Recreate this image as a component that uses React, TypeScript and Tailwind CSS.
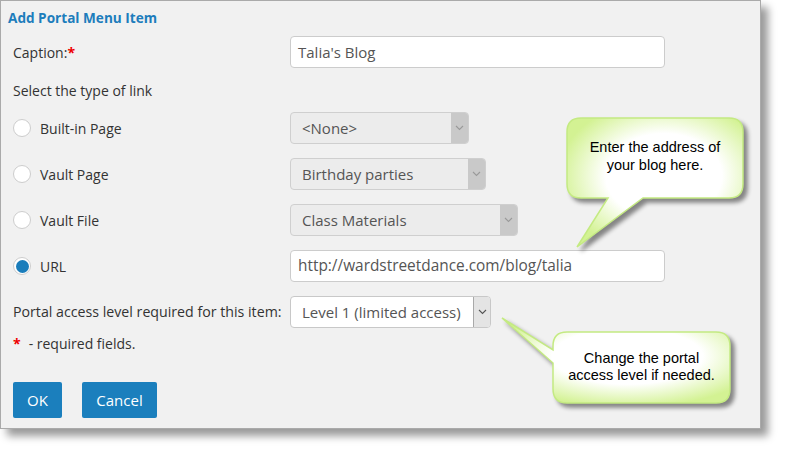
import React from 'react';

type SelectProps = {
  value: string;
  width: string;
  disabled?: boolean;
};

function Chevron({ color }: { color: string }) {
  return (
    <svg width="9" height="6" viewBox="0 0 9 6" fill="none">
      <path d="M1 1l3.5 3.5L8 1" stroke={color} strokeWidth="1.1" />
    </svg>
  );
}

function FakeSelect({ value, width, disabled }: SelectProps) {
  return (
    <div
      className={`flex h-[32px] items-stretch overflow-hidden rounded-[4px] border ${width} ${
        disabled ? 'border-[#cfcfcf] bg-[#ececec]' : 'border-[#c8c8c8] bg-white'
      }`}
    >
      <div className="flex flex-1 items-center whitespace-nowrap pl-[11px] text-[15px] text-[#555]">{value}</div>
      <div
        className={`flex w-[17px] shrink-0 items-center justify-center ${
          disabled ? 'bg-[#c9c9c9]' : 'border-l border-[#a9a9a9] bg-[#e4e4e4]'
        }`}
      >
        <Chevron color={disabled ? '#9a9a9a' : '#555'} />
      </div>
    </div>
  );
}

function Radio({ checked }: { checked?: boolean }) {
  return (
    <span className="flex h-[18px] w-[18px] items-center justify-center rounded-full border border-[#cdcdcd] bg-white">
      {checked && <span className="h-[13px] w-[13px] rounded-full bg-[#1a7dbb]" />}
    </span>
  );
}

function RadioRow({ label, checked, children }: { label: string; checked?: boolean; children: React.ReactNode }) {
  return (
    <div className="flex h-[32px] items-center">
      <div className="flex w-[277px] items-center gap-[9px]">
        <Radio checked={checked} />
        <span className="text-[14px] text-[#333]">{label}</span>
      </div>
      {children}
    </div>
  );
}

function Callout({ className, path, gradId, children }: { className: string; path: string; gradId: string; children: React.ReactNode }) {
  return (
    <div className={`absolute ${className}`}>
      <svg className="absolute inset-0 h-full w-full drop-shadow-[4px_4px_2px_rgba(0,0,0,0.45)]" overflow="visible">
        <defs>
          <radialGradient id={gradId} cx="0.55" cy="0.45" r="0.6">
            <stop offset="0.55" stopColor="#ffffff" />
            <stop offset="1" stopColor="#d3f293" />
          </radialGradient>
        </defs>
        <path d={path} fill={`url(#${gradId})`} stroke="#c4ea82" strokeWidth="1.5" />
      </svg>
      {children}
    </div>
  );
}

export default function App() {
  return (
    <div className="relative h-[454px] w-[785px] bg-white font-['Open_Sans',sans-serif]">
      <div className="flex h-[429px] w-[761px] flex-col border border-[#aaaaaa] bg-[#f1f1f1] shadow-[7px_7px_8px_rgba(0,0,0,0.4)]">
        {/* Header */}
        <div className="pl-[7px] pt-[7px] text-[13.6px] font-bold leading-[20px] text-[#1d7dbc]">Add Portal Menu Item</div>

        <div className="flex flex-col px-[12px]">
          {/* Caption */}
          <div className="mt-[8px] flex h-[32px] items-center">
            <div className="w-[277px] text-[14px] text-[#333]">
              Caption:<span className="font-bold text-[#e00]">*</span>
            </div>
            <div className="flex h-[32px] w-[375px] items-center rounded-[4px] border border-[#cccccc] bg-white pl-[7px] text-[15px] text-[#555]">
              Talia&apos;s Blog
            </div>
          </div>

          <div className="mt-[13px] text-[14px] leading-[20px] text-[#333]">Select the type of link</div>

          {/* Link types */}
          <div className="mt-[11px] flex flex-col gap-[14px]">
            <RadioRow label="Built-in Page">
              <FakeSelect value="<None>" width="w-[179px]" disabled />
            </RadioRow>
            <RadioRow label="Vault Page">
              <FakeSelect value="Birthday parties" width="w-[196px]" disabled />
            </RadioRow>
            <RadioRow label="Vault File">
              <FakeSelect value="Class Materials" width="w-[228px]" disabled />
            </RadioRow>
            <RadioRow label="URL" checked>
              <div className="flex h-[32px] w-[375px] items-center rounded-[4px] border border-[#cccccc] bg-white pl-[7px] text-[15.4px] text-[#555]">
                http://wardstreetdance.com/blog/talia
              </div>
            </RadioRow>
            <div className="flex h-[32px] items-center">
              <div className="w-[277px] text-[14.2px] text-[#333]">Portal access level required for this item:</div>
              <FakeSelect value="Level 1 (limited access)" width="w-[201px]" />
            </div>
          </div>

          <div className="mt-[6px] text-[14px] leading-[20px] text-[#333]">
            <span className="mr-[8px] font-bold text-[#e00]">*</span>- required fields.
          </div>

          {/* Buttons */}
          <div className="mt-[28px] flex gap-[20px]">
            <button className="h-[36px] w-[49px] rounded-[2px] bg-[#1b7fbd] text-[15px] text-white">OK</button>
            <button className="h-[36px] w-[75px] rounded-[2px] bg-[#1b7fbd] text-[15px] text-white">Cancel</button>
          </div>
        </div>
      </div>

      <Callout
        className="left-[560px] top-[110px] h-[150px] w-[200px]"
        gradId="g1"
        path="M21 8H169Q183 8 183 22V74Q183 88 169 88H83L17 137L48 88H21Q7 88 7 74V22Q7 8 21 8Z"
      >
        <div className="absolute left-[7px] top-[28px] w-[176px] text-center font-['Liberation_Sans',Arial,sans-serif] text-[14.5px] leading-[18px] text-black">
          Enter the address of
          <br />
          your blog here.
        </div>
      </Callout>

      <Callout
        className="left-[490px] top-[310px] h-[110px] w-[260px]"
        gradId="g2"
        path="M77 22H226Q240 22 240 36V79Q240 93 226 93H77Q63 93 63 79V53L12 8L63 40V36Q63 22 77 22Z"
      >
        <div className="absolute left-[63px] top-[40px] w-[177px] text-center font-['Liberation_Sans',Arial,sans-serif] text-[14.5px] leading-[17px] text-black">
          Change the portal
          <br />
          access level if needed.
        </div>
      </Callout>
    </div>
  );
}
